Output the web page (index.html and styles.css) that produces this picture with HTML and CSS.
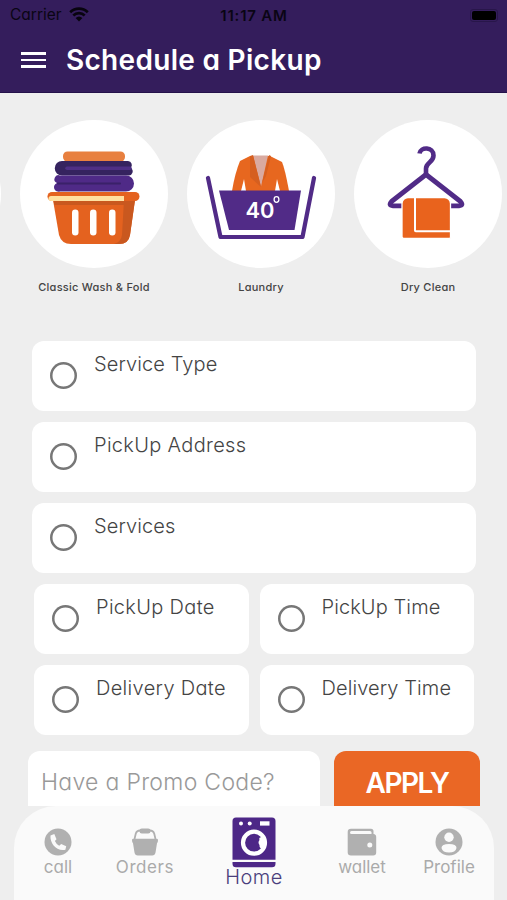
FILE: index.html
```html
<!DOCTYPE html>
<html lang="en">
<head>
    <meta charset="UTF-8">
    <title>Schedule a Pickup</title>
    <link rel="stylesheet" href="styles.css">
</head>
<body>
    <div class="app">
        <header class="header">
            <div class="status-bar">
                <div class="carrier">
                    <span>Carrier</span>
                    <svg width="20" height="15" viewBox="0 0 20 15">
                        <path d="M1.2 5.2a12.6 12.6 0 0 1 17.6 0M4.3 8.5a8.2 8.2 0 0 1 11.4 0" fill="none" stroke="#08040f" stroke-width="2.7"/>
                        <path d="M6.6 11a5 5 0 0 1 6.8 0L10 14.4z" fill="#08040f"/>
                    </svg>
                </div>
                <div class="time">11:17 AM</div>
                <div class="battery"><span></span></div>
            </div>
            <div class="title-bar">
                <div class="menu"><i></i><i></i><i></i></div>
                <h1>Schedule a Pickup</h1>
            </div>
        </header>

        <main class="content">
            <div class="services">
                <div class="service">
                    <div class="circle"></div>
                </div>
                <div class="service">
                    <div class="circle">
                        <!-- basket -->
                        <svg width="148" height="148" viewBox="0 0 148 148">
                            <rect x="43" y="31.500" width="62" height="10" rx="4.500" fill="#e8803f"/>
                            <path d="M42 41h66a4 4 0 0 1 2.500 7 4 4 0 0 1-2.500 7.500H42a7 7 0 0 1 0-14.500z" fill="#35235f"/>
                            <path d="M47 48.300h63" stroke="#4e2f85" stroke-width="3.500" stroke-linecap="round"/>
                            <path d="M106 55.500H40a4 4 0 0 0-3 7.500 4.500 4.500 0 0 0 3 8.500h66a8 8 0 0 0 0-16z" fill="#4f2a87"/>
                            <path d="M38 63.500h62" stroke="#3a2169" stroke-width="2" stroke-linecap="round"/>
                            <path d="M33 80h82l-5 35q-1.500 9-11 9H51q-9.500 0-12-9z" fill="#e4621f"/>
                            <path d="M104 80h11l-5 35q-1.500 9-11 9H94q7-2 8-9z" fill="#c9581f"/>
                            <path d="M33.500 80h81l-.8 5H34.300z" fill="#c9581f"/>
                            <rect x="27.500" y="72" width="92" height="9" rx="4.500" fill="#e4621f"/>
                            <path d="M31 76h73v5H31a2.500 2.500 0 0 1 0-5z" fill="#ffe0a0"/>
                            <g fill="#fff">
                                <rect x="52" y="89.500" width="6.500" height="26" rx="3.250"/>
                                <rect x="70" y="89.500" width="6.500" height="26" rx="3.250"/>
                                <rect x="89" y="89.500" width="6.500" height="26" rx="3.250"/>
                            </g>
                        </svg>
                    </div>
                    <p>Classic Wash &amp; Fold</p>
                </div>
                <div class="service">
                    <div class="circle">
                        <!-- wash tub with jacket -->
                        <svg width="148" height="148" viewBox="0 0 148 148">
                            <path d="M63 36h20l12 6q3 7 7 29H45q3-18 8-30z" fill="#e7671f"/>
                            <path d="M66 35.500h15l-7 31z" fill="#d9aaa0"/>
                            <path d="M63 36l3-1 8 32-11-10z" fill="#d55f20"/>
                            <path d="M82 35l2 1-5 20-4 7z" fill="#d55f20"/>
                            <path d="M57 59l2 12h-5zM90 59l3 12h-5z" fill="#fff"/>
                            <path d="M32 70.500h82l-6.500 39.500H42z" fill="#512b87"/>
                            <path d="M21 58l12.500 59h82L127 58" fill="none" stroke="#512b87" stroke-width="4.200" stroke-linecap="round" stroke-linejoin="round"/>
                            <text class="tub-temp" x="58.500" y="98" textLength="29" lengthAdjust="spacingAndGlyphs">40</text>
                            <ellipse cx="89.500" cy="79.500" rx="2.400" ry="2.800" fill="none" stroke="#fff" stroke-width="1.300"/>
                        </svg>
                    </div>
                    <p>Laundry</p>
                </div>
                <div class="service">
                    <div class="circle">
                        <!-- hanger with towel -->
                        <svg width="148" height="148" viewBox="0 0 148 148">
                            <path d="M65.500 33.500c1-7 14-7 14 2 0 7-7.500 7-7.500 13v6" fill="none" stroke="#512b87" stroke-width="4.600" stroke-linecap="butt"/>
                            <path d="M72 54.500L37.500 81.500Q34 85.500 39 85.800h66q5-.3 1.500-4.300z" fill="none" stroke="#512b87" stroke-width="4.800" stroke-linejoin="round"/>
                            <path d="M54 77.500h36.500a6 6 0 0 1 6 6V117a1.500 1.500 0 0 1-1.500 1.500H50a2 2 0 0 1-2-2V83.500a6 6 0 0 1 6-6z" fill="#e9631d" stroke="#fff" stroke-width="1.300"/>
                            <path d="M61 78v32.500q0 .8.800.8H96.500" fill="none" stroke="#fff" stroke-width="2"/>
                        </svg>
                    </div>
                    <p>Dry Clean</p>
                </div>
            </div>

            <div class="options">
                <div class="option"><span class="radio"></span><span class="label">Service Type</span></div>
                <div class="option"><span class="radio"></span><span class="label wide">PickUp Address</span></div>
                <div class="option"><span class="radio"></span><span class="label">Services</span></div>
                <div class="option-row">
                    <div class="option"><span class="radio"></span><span class="label wide">PickUp Date</span></div>
                    <div class="option"><span class="radio"></span><span class="label">PickUp Time</span></div>
                </div>
                <div class="option-row">
                    <div class="option"><span class="radio"></span><span class="label wide">Delivery Date</span></div>
                    <div class="option"><span class="radio"></span><span class="label">Delivery Time</span></div>
                </div>
            </div>

            <div class="promo">
                <div class="promo-input">Have a Promo Code?</div>
                <div class="apply">APPLY</div>
            </div>
        </main>

        <nav class="nav">
            <div class="nav-item">
                <svg width="28" height="28" viewBox="0 0 28 28">
                    <circle cx="14" cy="14" r="13.500" fill="#b0b0b0"/>
                    <path d="M6.500 7.500l3.800-1.500 2.200 5.200-1.600 1.900q1.300 3.200 4.300 4.700l2-1.900 5 2.400-.8 3.400C12.500 23.500 5.800 15.500 6.500 7.500z" fill="#fafafa"/>
                </svg>
                <span>call</span>
            </div>
            <div class="nav-item orders">
                <svg width="28" height="28" viewBox="0 0 28 28">
                    <path d="M3.500 11L4.800 5.500Q5.800 2.500 9 2.500h10q3.200 0 4.200 3l1.300 5.500" fill="none" stroke="#b0b0b0" stroke-width="1.800"/>
                    <rect x="8.500" y=".5" width="11" height="5" rx="2.300" fill="#b0b0b0"/>
                    <path d="M2.200 10.800h23.600q1.200 0 1.200 1.400 0 2-1 3l-1.500 9.300q-.5 3-3.300 3H6.800q-2.800 0-3.300-3L2 15.200q-1-1-1-3 0-1.400 1.200-1.400z" fill="#b0b0b0"/>
                </svg>
                <span>Orders</span>
            </div>
            <div class="nav-item home">
                <svg width="44" height="51" viewBox="0 0 44 51">
                    <path d="M4 .5h36a3.500 3.500 0 0 1 3.500 3.500v38.800H.5V4A3.500 3.500 0 0 1 4 .5zM.5 45h43v1.800a3.500 3.500 0 0 1-3.500 3.500H4a3.500 3.500 0 0 1-3.500-3.500z" fill="#4d2787"/>
                    <circle cx="9" cy="6.500" r="2" fill="#fff"/>
                    <circle cx="17.700" cy="6.500" r="2" fill="#fff"/>
                    <rect x="28" y="4.300" width="9.500" height="4.300" fill="#fff"/>
                    <circle cx="22" cy="25.700" r="11" fill="#4d2787" stroke="#fff" stroke-width="4.200"/>
                    <path d="M32 20q-6-.5-4.500 3-2 2.500 0 5-.5 3.500 3.500 3.500z" fill="#fff"/>
                </svg>
                <span>Home</span>
            </div>
            <div class="nav-item">
                <svg width="30" height="28" viewBox="0 0 30 28">
                    <path d="M4 .8h20q2.500 0 2.500 2.500V6q2.700.3 2.700 3v15.500q0 3-3 3H4q-3.300 0-3.300-3V4Q.7.800 4 .8z" fill="#b0b0b0"/>
                    <path d="M4.500 3H23q1.500 0 1.500 1.500V6H4.500q-1.500 0-1.500-1.500T4.500 3z" fill="#fafafa"/>
                    <circle cx="22.800" cy="17" r="2.500" fill="#fafafa"/>
                </svg>
                <span>wallet</span>
            </div>
            <div class="nav-item">
                <svg width="28" height="28" viewBox="0 0 28 28">
                    <circle cx="14" cy="14" r="13.500" fill="#b0b0b0"/>
                    <circle cx="14" cy="9.200" r="4.700" fill="#fafafa"/>
                    <path d="M6.500 20q0-4 7.500-4t7.500 4q-1 4.500-7.500 4.500T6.500 20z" fill="#fafafa"/>
                </svg>
                <span>Profile</span>
            </div>
        </nav>
    </div>
</body>
</html>
```
FILE: styles.css
```css
* {
    box-sizing: border-box;
}

body {
    margin: 0;
    background: #eee;
    font-family: Inter, "Liberation Sans", sans-serif;
    font-feature-settings: "cv11", "ss03"; /* single-storey a */
    color: #444;
    overflow: hidden;
}

svg {
    display: block;
}

.app {
    display: flex;
    flex-direction: column;
    width: 507px;
    height: 900px;
    background: #eee;
}

/* header */
.header {
    height: 92.5px;
    flex-shrink: 0;
    background: #341d5c;
    border-bottom: 1px solid #24114a;
}

.status-bar {
    display: grid;
    grid-template-columns: 1fr auto 1fr;
    align-items: center;
    height: 30px;
    padding: 0 9px 0 10px;
    color: #0a0514;
    font-size: 15.5px;
}

.carrier {
    display: flex;
    gap: 7px;
}

.carrier span {
    line-height: 16px;
}

.time {
    font-weight: 600;
    font-size: 15px;
    letter-spacing: 0.8px;
}

.battery {
    justify-self: end;
    padding: 1px;
    border: 1px solid #28164a;
    border-radius: 3px;
}

.battery span {
    display: block;
    width: 24px;
    height: 9px;
    border-radius: 2px;
    background: #000;
}

.title-bar {
    display: flex;
    align-items: center;
    gap: 20px;
    height: 60px;
    padding-left: 21px;
}

.menu {
    display: flex;
    flex-direction: column;
    gap: 4px;
    width: 25px;
}

.menu i {
    height: 2.7px;
    background: #fff;
}

h1 {
    margin: 0;
    color: #fff;
    font-size: 28px;
    font-weight: 600;
    letter-spacing: 0.3px;
    white-space: nowrap;
}

/* service carousel */
.content {
    height: 713.5px;
    flex-shrink: 0;
    overflow: hidden;
}

.services {
    display: flex;
    gap: 19px;
    height: 248px;
    margin-left: -147px;
    padding-top: 27px;
}

.service {
    width: 148px;
    flex-shrink: 0;
}

.circle {
    width: 148px;
    height: 148px;
    border-radius: 50%;
    background: #fff;
}

.tub-temp {
    fill: #fff;
    font-size: 21px;
    font-weight: 600;
}

.service p {
    margin: 12px 0 0;
    font-size: 11px;
    line-height: 14px;
    font-weight: 500;
    letter-spacing: 0.25px;
    text-align: center;
}

/* options */
.options {
    display: flex;
    flex-direction: column;
    gap: 11px;
    padding: 0 31px 0 32px;
}

.option {
    display: flex;
    flex: 1 1 70px;
    gap: 17px;
    height: 70px;
    padding: 11px 0 0 18px;
    border-radius: 12px;
    background: #fff;
}

.option-row {
    display: flex;
    gap: 11px;
    padding: 0 2px;
}

.radio {
    width: 27px;
    height: 27px;
    margin-top: 10px;
    border-radius: 50%;
    box-shadow: inset 0 0 0 2.5px #777;
}

.label {
    font-size: 20px;
    line-height: 24px;
    font-weight: 300;
    letter-spacing: 0.1px;
    white-space: nowrap;
}

.wide {
    letter-spacing: 0.32px;
}

/* promo */
.promo {
    display: flex;
    gap: 14px;
    margin: 16px 27px 0 28px;
}

.promo-input {
    width: 292px;
    height: 70px;
    padding-left: 13px;
    border-radius: 12px;
    background: #fff;
    color: #999;
    font-size: 23px;
    line-height: 63px;
    font-weight: 300;
    letter-spacing: 0.3px;
    white-space: nowrap;
}

.apply {
    width: 146px;
    height: 70px;
    border-radius: 12px;
    background: #ea6725;
    color: #fff;
    font-size: 28px;
    line-height: 64px;
    font-weight: 600;
    letter-spacing: -1.5px;
    text-align: center;
}

/* bottom nav */
.nav {
    display: grid;
    flex: 1;
    grid-template-columns: 88px 86px 132px 84px 90px;
    margin: 0 13px 0 14px;
    border-radius: 42px 42px 0 0;
    background: #fafafa;
    color: #aaa;
    font-size: 17px;
}

.nav-item {
    display: flex;
    flex-direction: column;
    align-items: center;
    gap: 1px;
    padding-top: 22px;
    line-height: 20px;
}

.orders {
    letter-spacing: 0.6px;
}

.home {
    gap: 0;
    padding-top: 11px;
    color: #4a3f7c;
    font-size: 20px;
    line-height: 18px;
    font-weight: 300;
    letter-spacing: 0.4px;
}
```
